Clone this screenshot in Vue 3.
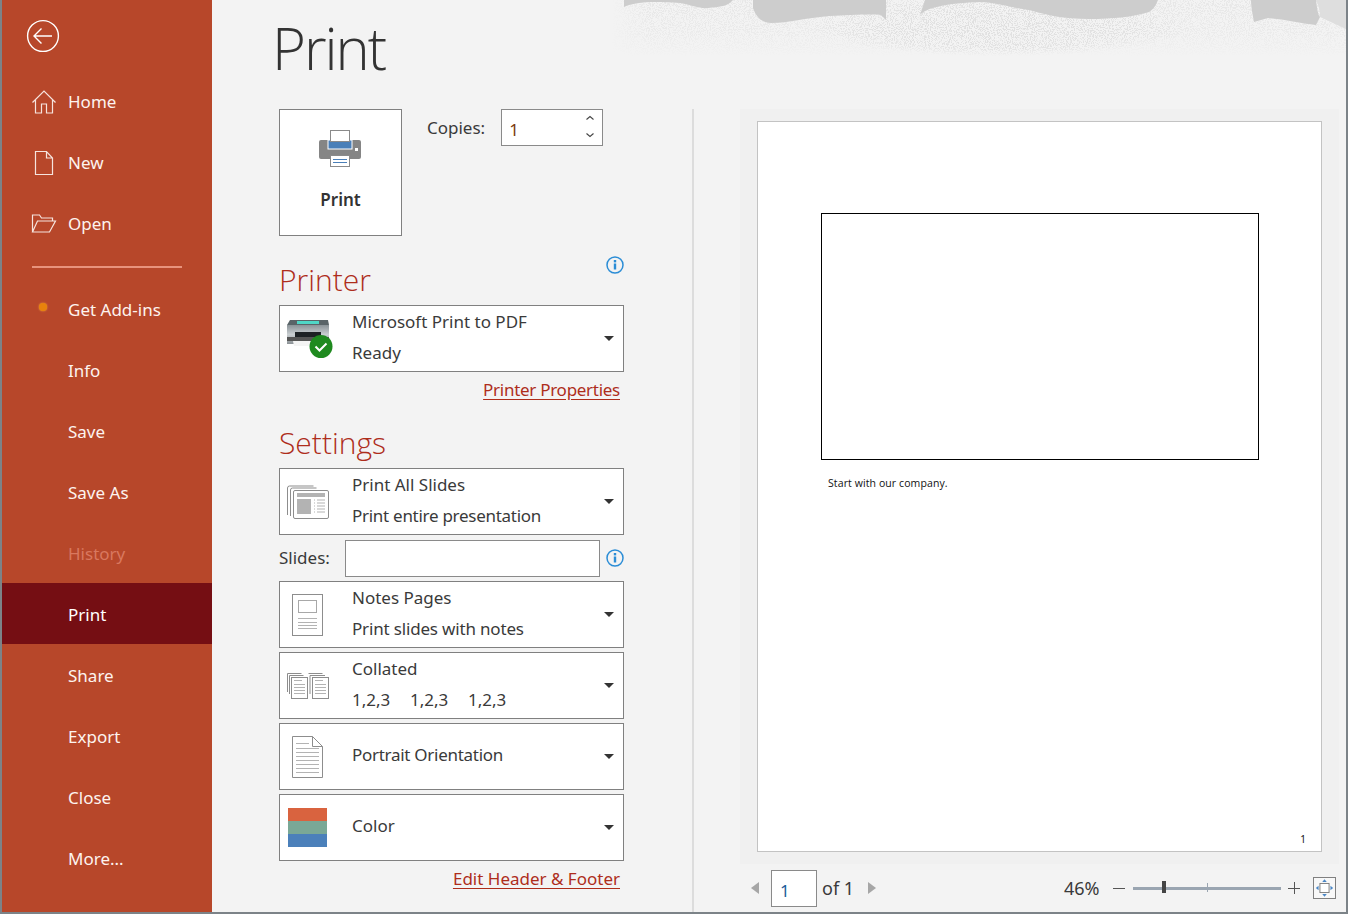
<script setup>
const navTop = ['Home', 'New', 'Open']
const navBottom = ['Get Add-ins', 'Info', 'Save', 'Save As', 'History', 'Print', 'Share', 'Export', 'Close', 'More...']
</script>

<template>
  <div class="window">
    <aside class="side">
      <div class="back">
        <svg width="34" height="34" viewBox="0 0 34 34" fill="none" stroke="#fff" stroke-width="1.4">
          <circle cx="17" cy="17" r="15.4" />
          <path d="M26 17H8M15.5 9.5 8 17l7.500 7.500" />
        </svg>
      </div>
      <nav class="nav-top">
        <a v-for="item in navTop" :key="item" class="nav-item">
          <svg v-if="item === 'Home'" class="nav-icon" width="26" height="26" viewBox="0 0 26 26" fill="none" stroke="#f6e4de" stroke-width="1.2">
            <path d="M1.500 13.500 13 2l11.500 11.500M4.500 11v13h6v-9h5v9h6V11" />
          </svg>
          <svg v-else-if="item === 'New'" class="nav-icon" width="26" height="26" viewBox="0 0 26 26" fill="none" stroke="#f6e4de" stroke-width="1.2">
            <path d="M4.500 1.500h11l6 6.500v16.500h-17zM15.500 1.500v6.500h6" />
          </svg>
          <svg v-else class="nav-icon" width="26" height="26" viewBox="0 0 26 26" fill="none" stroke="#f6e4de" stroke-width="1.2">
            <path d="M1.500 21V4h7l2 3h11v3M1.500 21h17l6-11H6.500z" />
          </svg>
          <span>{{ item }}</span>
        </a>
      </nav>
      <div class="rule"></div>
      <nav class="nav-bottom">
        <a v-for="item in navBottom" :key="item" class="nav-item" :class="{ active: item === 'Print', muted: item === 'History' }">
          <i v-if="item === 'Get Add-ins'" class="dot"></i>
          <span>{{ item }}</span>
        </a>
      </nav>
    </aside>

    <main class="main">
      <svg class="art" width="734" height="60" viewBox="612 0 734 60">
        <defs>
          <filter id="speck" x="0" y="0" width="100%" height="100%">
            <feTurbulence type="fractalNoise" baseFrequency="0.95" numOctaves="2" seed="4" />
            <feColorMatrix values="0 0 0 0 0.74  0 0 0 0 0.74  0 0 0 0 0.74  0 0 0 10 -4.900" />
          </filter>
          <linearGradient id="fade" x1="0" y1="0" x2="0" y2="1">
            <stop offset="0" stop-color="#999" />
            <stop offset="0.6" stop-color="#666" />
            <stop offset="1" stop-color="#000" />
          </linearGradient>
          <linearGradient id="edge" x1="0" y1="0" x2="1" y2="0">
            <stop offset="0" stop-color="#000" />
            <stop offset="0.05" stop-color="#000" stop-opacity="0" />
            <stop offset="1" stop-color="#000" stop-opacity="0" />
          </linearGradient>
          <radialGradient id="heart">
            <stop offset="0" stop-color="#fff" />
            <stop offset="0.7" stop-color="#ddd" />
            <stop offset="1" stop-color="#fff" stop-opacity="0" />
          </radialGradient>
          <mask id="fadeMask">
            <rect x="612" y="0" width="734" height="56" fill="url(#fade)" />
            <ellipse cx="1000" cy="26" rx="190" ry="30" fill="url(#heart)" />
            <rect x="612" y="0" width="734" height="56" fill="url(#edge)" />
          </mask>
        </defs>
        <rect x="612" y="0" width="734" height="56" filter="url(#speck)" mask="url(#fadeMask)" />
        <path class="s1" d="M624 7C635 2 650 1 680 3c12 2 20 6 28 5 12-1 20-2 25-8H624z" />
        <path class="s1" d="M753 8c3 9 9 15 18 15 18 0 34-5 58-7 20-1 45-2 52-1l5 5V0H753z" />
        <path class="s1" d="M920 15c6-7 25-12 62-13 22 2 35 7 47 8 18 5 34 9 60 9 24 0 43-2 60-7 5-3 7-7 9-12H925z" />
        <path class="s2" d="M1316 0c4 8 4 14 4 17l26 12V0z" />
        <path class="s1" d="M1251 0c0 8 2 16 3 22l14-4c16 1 32 5 48 7l4-8c-2-2-3-9-4-17z" />
      </svg>

      <h1 class="title">Print</h1>

      <div class="content">
        <section class="settings">
          <div class="print-row">
            <button class="print-btn">
              <svg width="42" height="37" viewBox="0 0 42 37">
                <rect x="0" y="10" width="42" height="19" rx="2" fill="#858585" />
                <rect x="9" y="10" width="24" height="9" fill="#4a7fb8" stroke="#fff" />
                <rect x="11.500" y="0.500" width="19" height="11" fill="#fff" stroke="#8a8a8a" />
                <rect x="11.500" y="25.500" width="19" height="11" fill="#fff" stroke="#8a8a8a" />
                <path d="M14 29.500h14M14 32.500h14" stroke="#4a7fb8" />
                <rect x="36" y="18" width="3" height="3" fill="#fff" />
              </svg>
              <span>Print</span>
            </button>
            <label class="copies-label">Copies:</label>
            <div class="copies">
              <span class="field-value">1</span>
              <span class="spin">
                <svg width="10" height="6" viewBox="0 0 10 6" fill="none" stroke="#444" stroke-width="1.100"><path d="M1.500 4.500 5 1.500l3.500 3" /></svg>
                <svg width="10" height="6" viewBox="0 0 10 6" fill="none" stroke="#444" stroke-width="1.100"><path d="M1.500 1.500 5 4.500l3.500-3" /></svg>
              </span>
            </div>
          </div>

          <div class="section-head printer-head">
            <h2>Printer</h2>
            <svg class="info" width="20" height="20" viewBox="0 0 20 20"><circle cx="10" cy="10" r="8" fill="none" stroke="#2b8dd6" stroke-width="1.500" /><rect x="8.800" y="8.500" width="2.400" height="6" fill="#2b8dd6" /><rect x="8.800" y="5" width="2.400" height="2.400" fill="#2b8dd6" /></svg>
          </div>

          <div class="drop">
            <div class="drop-icon">
              <svg width="46" height="40" viewBox="0 0 46 40">
                <defs>
                  <linearGradient id="pr" x1="0" y1="0" x2="0" y2="1"><stop offset="0" stop-color="#8b9398" /><stop offset="0.5" stop-color="#c9ced1" /><stop offset="1" stop-color="#8c9296" /></linearGradient>
                </defs>
                <path d="M3 1h38l1 5H0z" fill="#5a6468" />
                <rect x="10" y="2" width="22" height="3" fill="#4fd6c6" />
                <rect x="0" y="6" width="42" height="19" fill="url(#pr)" />
                <rect x="8" y="13" width="26" height="5" fill="#1d2124" />
                <rect x="0" y="18" width="42" height="4" fill="#555" />
                <path d="M6 22h30l3 5H7z" fill="#f4f4f4" />
                <circle cx="34" cy="27.500" r="11.500" fill="#1f8a1f" />
                <path d="M28.500 27.500l4 4 7-7" fill="none" stroke="#fff" stroke-width="2" />
              </svg>
            </div>
            <div class="drop-text"><span>Microsoft Print to PDF</span><span>Ready</span></div>
            <i class="caret"></i>
          </div>

          <div class="link-row props"><a class="link narrow">Printer Properties</a></div>
          <h2 class="settings-head">Settings</h2>

          <div class="drop">
            <div class="drop-icon">
              <svg width="42" height="34" viewBox="0 0 42 34" fill="none" stroke="#8d8d8d">
                <path d="M.5 30V3a2 2 0 0 1 2-2h24M3.500 31V5a2 2 0 0 1 2-2h24" />
                <rect x="6.500" y="5.500" width="35" height="28" rx="1.500" fill="#fff" />
                <rect x="10" y="8" width="28" height="4" fill="#b3b3b3" stroke="none" />
                <rect x="10" y="14" width="14" height="15" fill="#b3b3b3" stroke="none" />
                <path d="M27 15h1M27 18h1M27 21h1M27 24h1M27 27h1M30 15h8M30 18h8M30 21h8M30 24h8M30 27h8" stroke="#b3b3b3" />
              </svg>
            </div>
            <div class="drop-text"><span>Print All Slides</span><span class="narrow">Print entire presentation</span></div>
            <i class="caret"></i>
          </div>

          <div class="slides-row">
            <label>Slides:</label>
            <div class="slides-field"></div>
            <svg class="info-inline" width="20" height="20" viewBox="0 0 20 20"><circle cx="10" cy="10" r="8" fill="none" stroke="#2b8dd6" stroke-width="1.500" /><rect x="8.800" y="8.500" width="2.400" height="6" fill="#2b8dd6" /><rect x="8.800" y="5" width="2.400" height="2.400" fill="#2b8dd6" /></svg>
          </div>

          <div class="drop tight">
            <div class="drop-icon">
              <svg class="shift" width="32" height="42" viewBox="0 0 32 42" fill="none" stroke="#8d8d8d">
                <rect x="0.500" y="0.500" width="30" height="41" />
                <rect x="6.500" y="6.500" width="18" height="12" stroke="#a8a8a8" />
                <path d="M6 24.500h19M6 28.500h19M6 31.500h19M6 34.500h19" stroke="#b3b3b3" />
              </svg>
            </div>
            <div class="drop-text"><span>Notes Pages</span><span class="narrow-sm">Print slides with notes</span></div>
            <i class="caret"></i>
          </div>

          <div class="drop tight">
            <div class="drop-icon">
              <svg width="42" height="27" viewBox="0 0 42 27" fill="none" stroke="#8d8d8d">
                <path d="M.5 20V1.500h14M2.500 22V3.500h14M21.500 1.500h14" />
                <rect x="4.500" y="5.500" width="16" height="21" fill="#fff" />
                <rect x="25.500" y="5.500" width="16" height="21" fill="#fff" />
                <path d="M23 22V3.500h15" />
                <path d="M7 8.500h8M7 12.500h11M7 15.500h11M7 18.500h11M7 21.500h11M28 8.500h8M28 12.500h11M28 15.500h11M28 18.500h11M28 21.500h11" stroke="#b3b3b3" />
              </svg>
            </div>
            <div class="drop-text"><span>Collated</span><span class="seq"><b>1,2,3</b><b>1,2,3</b><b>1,2,3</b></span></div>
            <i class="caret"></i>
          </div>

          <div class="drop tight">
            <div class="drop-icon">
              <svg class="shift" width="32" height="42" viewBox="0 0 32 42" fill="none" stroke="#8d8d8d">
                <path d="M.5.500h20l10 10v31H.5zM20.500.500v10h10" />
                <path d="M4 7.500h13M4 12.500h23M4 16.500h23M4 20.500h23M4 24.500h23M4 28.500h23M4 32.500h23M4 36.500h23" stroke="#b3b3b3" />
              </svg>
            </div>
            <div class="drop-text"><span class="narrow">Portrait Orientation</span></div>
            <i class="caret"></i>
          </div>

          <div class="drop tight">
            <div class="drop-icon">
              <div class="swatch"><i class="red"></i><i class="green"></i><i class="blue"></i></div>
            </div>
            <div class="drop-text"><span>Color</span></div>
            <i class="caret"></i>
          </div>

          <div class="link-row footer-link"><a class="link">Edit Header &amp; Footer</a></div>
        </section>

        <div class="divider"></div>

        <section class="preview">
          <div class="stage">
            <div class="page">
              <div class="slide"></div>
              <p class="notes">Start with our company.</p>
              <span class="page-num">1</span>
            </div>
          </div>
          <div class="pager">
            <i class="arrow left"></i>
            <div class="page-field"><span class="field-value">1</span></div>
            <span class="of">of 1</span>
            <i class="arrow right"></i>
            <span class="zoom-val">46%</span>
            <span class="zoom-minus"></span>
            <div class="slider"><i class="tick"></i><i class="thumb"></i></div>
            <span class="zoom-plus"></span>
            <div class="fit">
              <svg width="21" height="20" viewBox="0 0 23 21">
                <rect x="6.500" y="5.500" width="10" height="10" fill="#fff" stroke="#777" />
                <path d="M11.500 1l2.500 3H9zM11.500 20l2.500-3H9zM2 10.500l3-2.500v5zM21 10.500l-3-2.500v5z" fill="#4a86c5" />
              </svg>
            </div>
          </div>
        </section>
      </div>
    </main>
  </div>
</template>

<style>
html, body { margin: 0; background: #f3f3f3; overflow: hidden; }
</style>

<style scoped>
* { box-sizing: border-box; }
.window {
  display: flex;
  width: 1348px;
  height: 914px;
  border-left: 2px solid #7c8388;
  border-right: 2px solid #7c8388;
  border-bottom: 2px solid #7c8388;
  font-family: "Noto Sans", "Open Sans", sans-serif;
  color: #3a3a3a;
  font-size: 17px;
  overflow: hidden;
}
.side {
  width: 210px;
  flex: none;
  background: #b7472a;
  color: #fff;
}
.back { height: 72px; padding: 19px 0 0 24px; }
.back svg { display: block; }
.nav-item {
  position: relative;
  display: flex;
  align-items: center;
  height: 61px;
  padding-left: 66px;
  font-size: 17px;
  color: #fdf3ef;
}
.nav-top .nav-item { padding-bottom: 2px; }
.nav-bottom .nav-item { padding-top: 2px; }
.nav-icon { position: absolute; left: 29px; top: 17px; }
.active { background: #750e13; color: #fff; }
.muted { color: #d9785f; }
.dot {
  position: absolute;
  left: 37px;
  top: 25px;
  width: 8px;
  height: 8px;
  border-radius: 50%;
  background: #e8820c;
  box-shadow: 0 0 2px #f0a040;
}
.rule { height: 2px; margin: 11px 30px 10px; background: #e8937c; }
.main {
  position: relative;
  flex: 1;
  min-width: 0;
  background: #f3f3f3;
}
.art { position: absolute; right: 0; top: 0; }
.s1 { fill: #cdcdcd; }
.s2 { fill: #dedede; }
.title {
  position: relative;
  margin: 0;
  height: 109px;
  padding: 9px 0 0 60px;
  font-family: "Open Sans", sans-serif;
  font-size: 58px;
  line-height: 78px;
  font-weight: 300;
  letter-spacing: -2px;
  color: #333;
}
.content { display: flex; height: 803px; padding-left: 67px; }
.settings { width: 345px; flex: none; }
.print-row { display: flex; align-items: flex-start; height: 127px; }
.print-btn {
  display: flex;
  flex-direction: column;
  align-items: center;
  width: 123px;
  height: 127px;
  padding: 20px 0 0;
  background: #fff;
  border: 1px solid #808080;
  font: 600 17px "Noto Sans", sans-serif;
  color: #333;
}
.print-btn svg { margin-left: -1px; }
.print-btn span { margin-top: 20px; line-height: 26px; }
.copies-label { margin: 6px 16px 0 25px; line-height: 26px; }
.copies {
  position: relative;
  width: 102px;
  height: 37px;
  background: #fff;
  border: 1px solid #8a8a8a;
  padding-left: 7px;
}
.field-value { font-size: 17px; line-height: 39px; color: #7a3a10; }
.spin {
  position: absolute;
  right: 7px;
  top: 5px;
  display: flex;
  flex-direction: column;
  gap: 11px;
}
.spin svg { display: block; }
h2 {
  margin: 0;
  font-size: 30px;
  font-weight: 300;
  color: #ae2d1b;
  font-family: "Open Sans", "Noto Sans", sans-serif;
}
.section-head {
  position: relative;
  height: 69px;
  display: flex;
  align-items: flex-end;
}
.section-head h2 { line-height: 40px; margin-bottom: 5px; }
.info { position: absolute; right: -1px; top: 19px; }
.drop {
  position: relative;
  display: flex;
  align-items: center;
  height: 67px;
  background: #fff;
  border: 1px solid #808080;
}
.tight { margin-top: 4px; }
.drop-icon { width: 72px; flex: none; padding-left: 7px; display: flex; }
.drop-icon svg { display: block; }
.drop-icon .shift { margin-left: 5px; }
.drop-text { display: flex; flex-direction: column; line-height: 31px; margin-top: -4px; }
.narrow { letter-spacing: -0.28px; }
.narrow-sm { letter-spacing: -0.17px; }
.seq { display: flex; }
.seq b { width: 58px; font-weight: 400; }
.caret {
  position: absolute;
  right: 9px;
  top: 30px;
  border-left: 5.500px solid transparent;
  border-right: 5.500px solid transparent;
  border-top: 5.500px solid #333;
}
.link-row { display: flex; justify-content: flex-end; padding-right: 4px; }
.link {
  color: #ae2d1b;
  text-decoration: underline;
  text-underline-offset: 3px;
  line-height: 26px;
}
.props { height: 36px; padding-top: 5px; }
.settings-head { height: 60px; line-height: 70px; }
.slides-row { display: flex; align-items: center; height: 37px; margin-top: 5px; }
.slides-row label { flex: none; width: 66px; margin-top: -2px; }
.slides-field { flex: none; width: 255px; height: 37px; background: #fff; border: 1px solid #8a8a8a; }
.info-inline { flex: none; margin: -2px 0 0 5px; }
.swatch { display: flex; flex-direction: column; width: 39px; margin-left: 1px; }
.swatch i { height: 13px; }
.red { background: #d9633f; }
.green { background: #7aa896; }
.blue { background: #4b80ba; }
.footer-link { margin-top: 5px; }
.divider { width: 2px; margin-left: 68px; background: #dcdcdc; height: 803px; flex: none; }
.preview { width: 599px; margin-left: 46px; flex: none; }
.stage { height: 755px; background: #f0f0f0; padding: 12px 17px; }
.page {
  position: relative;
  width: 565px;
  height: 731px;
  background: #fff;
  border: 1px solid #c3c3c3;
  padding: 91px 0 0 63px;
}
.slide { width: 438px; height: 247px; border: 1px solid #000; }
.notes {
  margin: 16px 0 0 7px;
  font: 10.500px/14px "Open Sans", sans-serif;
  letter-spacing: 0.1px;
  color: #111;
}
.page-num {
  position: absolute;
  right: 15px;
  bottom: 5px;
  font-size: 10px;
  line-height: 14px;
  color: #111;
}
.pager { position: relative; display: flex; align-items: center; height: 48px; font-size: 18px; white-space: nowrap; }
.pager > * { flex: none; }
.arrow { width: 0; height: 0; border-top: 6.500px solid transparent; border-bottom: 6.500px solid transparent; }
.arrow.left { margin-left: 11px; border-right: 8px solid #a6a6a6; }
.arrow.right { margin-left: 14px; border-left: 8px solid #a6a6a6; }
.page-field {
  width: 46px;
  height: 37px;
  margin-left: 12px;
  padding-left: 8px;
  background: #fff;
  border: 1px solid #8a8a8a;
}
.page-field .field-value { color: #1c5c9a; }
.of { margin-left: 5px; width: 32px; }
.zoom-val { margin-left: 188px; width: 49px; }
.zoom-minus { width: 12px; height: 1px; background: #555; }
.slider { position: relative; width: 148px; height: 3px; margin-left: 8px; background: #9aa5b1; }
.tick { position: absolute; left: 74px; top: -4px; width: 1px; height: 9px; background: #9aa5b1; }
.thumb { position: absolute; left: 29px; top: -6px; width: 4px; height: 12px; background: #444; }
.zoom-plus {
  position: relative;
  width: 12px;
  height: 1px;
  margin-left: 7px;
  background: #555;
}
.zoom-plus::after {
  content: "";
  position: absolute;
  left: 5.500px;
  top: -5.500px;
  width: 1px;
  height: 12px;
  background: #555;
}
.fit {
  width: 23px;
  height: 22px;
  margin-left: 13px;
  border: 1px solid #808080;
  background: #f8f8f8;
  display: flex;
}
.fit svg { display: block; }
</style>
